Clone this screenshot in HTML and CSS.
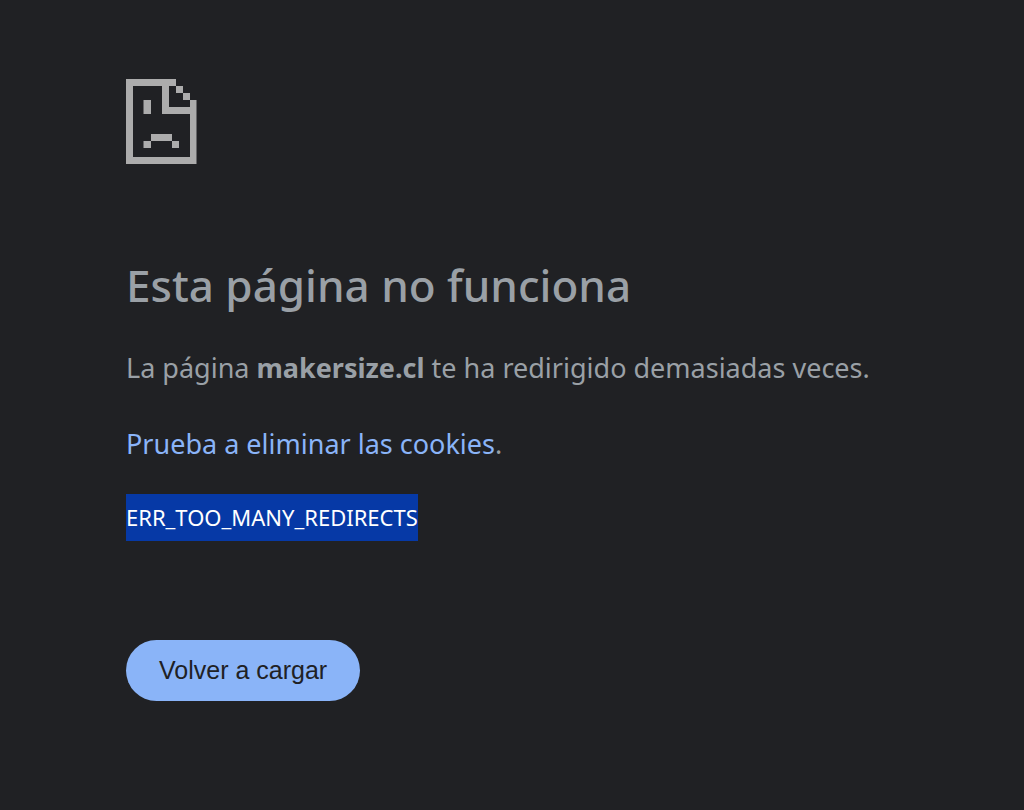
FILE: index.html
```html
<!DOCTYPE html>
<html lang="es">
<head>
    <meta charset="UTF-8">
    <meta name="viewport" content="width=device-width, initial-scale=1.0">
    <title>makersize.cl</title>
    <link rel="stylesheet" href="styles.css">
</head>
<body>
    <main class="error-page">
        <svg class="icon" viewBox="0 0 71 85" aria-hidden="true">
            <path d="M0 0h50v7h7v7h7v7h6.5v64H0zM7 7v71h57V35H36V7zM43 7v21h21v-7h-7v-7h-7V7zM17.5 21H25v14h-7.5zM25 55h21v7H25zM17.5 62H25v7h-7.5zM46 62h7v7h-7z" fill-rule="evenodd"/>
        </svg>
        <h1>Esta página no funciona</h1>
        <p>La página <strong>makersize.cl</strong> te ha redirigido demasiadas veces.</p>
        <p><a href="#">Prueba a eliminar las cookies</a>.</p>
        <div class="error-code"><span>ERR_TOO_MANY_REDIRECTS</span></div>
        <button class="reload-btn" type="button">Volver a cargar</button>
    </main>
</body>
</html>
```
FILE: styles.css
```css
body {
    margin: 0;
    background: #202124;
    color: #9aa0a6;
    font-family: 'Segoe UI', 'Noto Sans', sans-serif;
    font-size: 27px;
    line-height: 52px;
}

.error-page {
    padding: 79px 126px;
}

.icon {
    display: block;
    width: 71px;
    height: 85px;
    fill: #acacac;
}

h1 {
    margin: 91px 0 27px;
    font-size: 44px;
    font-weight: 500;
    line-height: 60px;
}

p {
    margin: 0 0 24px;
}

a {
    color: #8ab4f8;
    text-decoration: none;
}

/* Error code, shown selected */
.error-code {
    font-size: 22px;
    line-height: 47px;
}
.error-code span {
    display: inline-block;
    background: #0639a6;
    color: #fff;
}

.reload-btn {
    display: block;
    margin-top: 99px;
    padding: 0 33px;
    height: 61px;
    border: none;
    border-radius: 31px;
    background: #8ab4f8;
    color: #202124;
    font-family: 'Liberation Sans', Arial, sans-serif;
    font-size: 25px;
    cursor: pointer;
}
```
